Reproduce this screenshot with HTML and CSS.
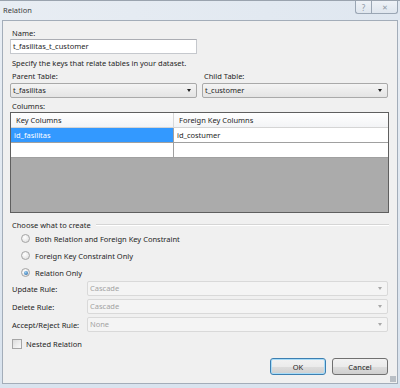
FILE: index.html
```html
<!DOCTYPE html>
<html lang="en">
<head>
  <meta charset="UTF-8" />
  <title>Relation</title>
  <link rel="stylesheet" href="styles.css">
</head>
<body>

<div class="window">
  <div class="titlebar">
    <span class="title">Relation</span>
    <div class="caption-btns">
      <span class="cap-btn help">?</span>
      <span class="cap-btn close">&#x2715;</span>
    </div>
  </div>

  <div class="panel">
    <div class="lbl name-lbl">Name:</div>
    <div class="textbox">t_fasilitas_t_customer</div>
    <div class="lbl hint">Specify the keys that relate tables in your dataset.</div>

    <div class="tables">
      <div class="table-pick parent">
        <div class="lbl">Parent Table:</div>
        <div class="combo">t_fasilitas<span class="arrow"></span></div>
      </div>
      <div class="table-pick child">
        <div class="lbl">Child Table:</div>
        <div class="combo">t_customer<span class="arrow"></span></div>
      </div>
    </div>

    <div class="lbl cols-lbl">Columns:</div>
    <div class="grid">
      <div class="grid-row head">
        <div class="cell key">Key Columns</div>
        <div class="cell fk">Foreign Key Columns</div>
      </div>
      <div class="grid-row">
        <div class="cell key selected">id_fasilitas</div>
        <div class="cell fk">id_costumer</div>
      </div>
      <div class="grid-row">
        <div class="cell key"></div>
        <div class="cell fk"></div>
      </div>
    </div>

    <div class="group-title">
      <span>Choose what to create</span>
      <span class="rule"></span>
    </div>
    <div class="radios">
      <div class="radio-row"><span class="radio"></span>Both Relation and Foreign Key Constraint</div>
      <div class="radio-row"><span class="radio"></span>Foreign Key Constraint Only</div>
      <div class="radio-row"><span class="radio checked"></span>Relation Only</div>
    </div>

    <div class="rules">
      <div class="rule-row">
        <span class="rule-lbl">Update Rule:</span>
        <div class="combo disabled">Cascade<span class="arrow"></span></div>
      </div>
      <div class="rule-row">
        <span class="rule-lbl">Delete Rule:</span>
        <div class="combo disabled">Cascade<span class="arrow"></span></div>
      </div>
      <div class="rule-row">
        <span class="rule-lbl">Accept/Reject Rule:</span>
        <div class="combo disabled">None<span class="arrow"></span></div>
      </div>
    </div>

    <div class="check-row"><span class="checkbox"></span>Nested Relation</div>

    <div class="buttons">
      <button class="btn default">OK</button>
      <button class="btn">Cancel</button>
    </div>
    <span class="grip"></span>
  </div>
</div>

</body>
</html>
```

FILE: styles.css
```css
body {
  margin: 0;
  padding: 0;
  background: #2b2b2b;
  font-family: "Noto Sans", "Open Sans", sans-serif;
  font-size: 7.5px;
  color: #1e1e1e;
}

.window {
  width: 400px;
  height: 388px;
  background: linear-gradient(to bottom, #e9eef4, #d9e3ee);
  box-sizing: border-box;
  border-top: 1px solid #9aa3ae;
  display: flex;
  flex-direction: column;
}

.titlebar {
  height: 19px;
  display: flex;
  align-items: flex-start;
  justify-content: space-between;
  background: linear-gradient(to right, #e8edf3, #dfe7f0);
}

.title {
  margin: 4px 0 0 3px;
  color: #3c3c3c;
  font-size: 7.5px;
}

.caption-btns {
  display: flex;
  margin-right: 2px;
}

.cap-btn {
  height: 13px;
  border: 1px solid #9aa6b4;
  border-top: none;
  box-sizing: border-box;
  display: flex;
  align-items: center;
  justify-content: center;
  color: #8e98a4;
  background: linear-gradient(to bottom, #eef2f7, #dfe6ee);
  font-size: 8px;
}

.cap-btn.help {
  width: 16px;
  border-radius: 0 0 0 3px;
  border-right: none;
}

.cap-btn.close {
  width: 27px;
  border-radius: 0 0 3px 0;
  font-size: 7px;
}

.panel {
  position: relative;
  margin: 0 2px 0 2px;
  height: 364px;
  box-sizing: border-box;
  background: #f0f0f0;
  border: 1px solid #a3adb9;
  padding: 0 8px 0 7px;
}

.lbl {
  height: 12px;
  line-height: 12px;
  padding-left: 2px;
  white-space: nowrap;
}

.name-lbl {
  margin-top: 6px;
}

.textbox {
  width: 187px;
  height: 15px;
  box-sizing: border-box;
  border: 1px solid #c5c8cd;
  border-top-color: #abadb3;
  background: #fff;
  line-height: 13px;
  padding-left: 2px;
}

.hint {
  margin-top: 3px;
  height: 13px;
  line-height: 13px;
}

.tables {
  display: flex;
  gap: 5px;
}

.table-pick.parent {
  width: 187px;
}

.table-pick.child {
  width: 186px;
}

.combo {
  position: relative;
  height: 15px;
  margin-top: 1px;
  box-sizing: border-box;
  border: 1px solid #a9a9a9;
  border-radius: 2px;
  background: linear-gradient(to bottom, #f4f4f4, #e4e4e4);
  line-height: 13px;
  padding-left: 2px;
}

.arrow {
  position: absolute;
  right: 5px;
  top: 5px;
  width: 0;
  height: 0;
  border-left: 2.5px solid transparent;
  border-right: 2.5px solid transparent;
  border-top: 3px solid #222;
}

.cols-lbl {
  margin-top: 2px;
}

.grid {
  height: 101px;
  box-sizing: border-box;
  border: 1px solid #5f5f5f;
  background: #ababab;
}

.grid-row {
  display: flex;
  height: 15px;
  box-sizing: border-box;
  border-bottom: 1px solid #a0a0a0;
  background: #fff;
}

.grid-row.head {
  background: linear-gradient(to bottom, #ffffff, #f3f4f6);
  border-bottom: 1px solid #d5d5d5;
}

.cell {
  line-height: 14px;
  padding-left: 3px;
  box-sizing: border-box;
}

.cell.key {
  width: 163px;
  border-right: 1px solid #a0a0a0;
}

.head .cell {
  padding-left: 5px;
}

.head .cell.key {
  border-right-color: #d8d8d8;
}

.cell.fk {
  flex: 1;
}

.cell.selected {
  background: #3399ff;
  color: #fff;
}

.group-title {
  display: flex;
  align-items: center;
  margin-top: 6px;
  height: 11px;
  padding-left: 2px;
}

.group-title .rule {
  flex: 1;
  margin-left: 5px;
  height: 0;
  border-top: 1px solid #d5d5d5;
  border-bottom: 1px solid #fff;
}

.radio-row {
  display: flex;
  align-items: center;
  height: 17px;
  padding-left: 11px;
}

.radio {
  width: 9px;
  height: 9px;
  box-sizing: border-box;
  border-radius: 50%;
  border: 1px solid #a5a5a5;
  background: radial-gradient(circle at 40% 35%, #ffffff, #dadada);
  margin-right: 5px;
  position: relative;
}

.radio.checked::after {
  content: "";
  position: absolute;
  left: 1.5px;
  top: 1.5px;
  width: 4px;
  height: 4px;
  border-radius: 50%;
  background: radial-gradient(circle at 40% 35%, #9ad0f5, #1a5a9a);
}

.rules {
  display: flex;
  flex-direction: column;
  gap: 3px;
}

.rule-row {
  display: flex;
  align-items: center;
}

.rule-lbl {
  width: 77px;
  padding-left: 2px;
  box-sizing: border-box;
  white-space: nowrap;
}

.rule-row .combo {
  flex: 1;
  margin-top: 0;
  margin-right: 1px;
  background: #f4f4f4;
  border-color: #d9d9d9;
  color: #a3a3a3;
}

.rule-row .arrow {
  border-top-color: #a8a8a8;
}

.check-row {
  display: flex;
  align-items: center;
  margin-top: 6px;
  height: 12px;
  padding-left: 2px;
}

.checkbox {
  width: 8px;
  height: 8px;
  border: 1px solid #a5a5a5;
  background: linear-gradient(135deg, #dcdcdc, #fafafa);
  margin-right: 4px;
}

.buttons {
  display: flex;
  justify-content: flex-end;
  gap: 6px;
  margin-top: 8px;
  padding-right: 1px;
}

.btn {
  width: 56px;
  height: 17px;
  box-sizing: border-box;
  border: 1px solid #707070;
  border-radius: 3px;
  background: linear-gradient(to bottom, #f2f2f2 0%, #ebebeb 50%, #dddddd 51%, #cfcfcf 100%);
  font-family: "Noto Sans", "Open Sans", sans-serif;
  font-size: 7.5px;
  color: #1e1e1e;
  padding: 0;
}

.btn.default {
  border-color: #3c7fb1;
  box-shadow: inset 0 0 0 1px #a8dcf8;
}

.grip {
  position: absolute;
  right: 1px;
  bottom: 1px;
  width: 6px;
  height: 6px;
  background: radial-gradient(circle, #9aa3ad 0.6px, transparent 0.9px) 0 0 / 2px 2px;
}
```
